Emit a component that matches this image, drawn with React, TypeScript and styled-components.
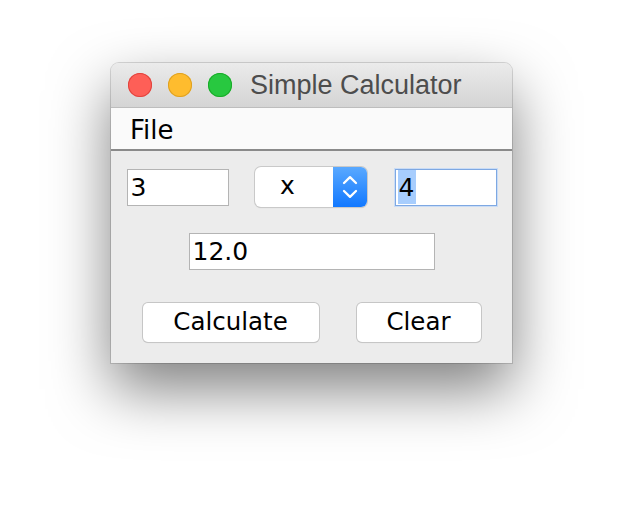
import React from "react";
import styled, { createGlobalStyle } from "styled-components";

const Global = createGlobalStyle`
  html, body { margin: 0; padding: 0; background: #ffffff; }
  body { font-family: "DejaVu Sans", "Liberation Sans", sans-serif; }
  * { box-sizing: border-box; }
`;

const Page = styled.div`
  width: 624px;
  height: 524px;
  padding: 63px 0 0 111px;
  background: #ffffff;
`;

const Window = styled.div`
  width: 401px;
  height: 300px;
  display: flex;
  flex-direction: column;
  border-radius: 8px 8px 0 0;
  overflow: hidden;
  background: #ececec;
  box-shadow: 0 0 0 1px rgba(0, 0, 0, 0.14), 0 26px 60px rgba(0, 0, 0, 0.5);
`;

const TitleBar = styled.div`
  height: 45px;
  flex: none;
  display: flex;
  align-items: center;
  padding: 0 0 0 17px;
  background: linear-gradient(#ebebeb, #d4d4d4);
  border-bottom: 1px solid #bdbdbd;
`;

const Light = styled.span<{ $fill: string; $edge: string }>`
  width: 24px;
  height: 24px;
  border-radius: 50%;
  margin-right: 16px;
  background: ${(p) => p.$fill};
  box-shadow: inset 0 0 0 1px ${(p) => p.$edge};
  flex: none;
`;

const Title = styled.span`
  margin-left: 2px;
  font-family: "Liberation Sans", Arial, sans-serif;
  font-size: 27px;
  color: #4d4d4d;
  line-height: 1;
  padding-top: 1px;
`;

const MenuBar = styled.div`
  height: 43px;
  flex: none;
  display: flex;
  align-items: center;
  padding: 3px 0 0 19px;
  background: #fafafa;
  border-bottom: 2px solid #8a8a8a;
`;

const MenuItem = styled.span`
  font-size: 26px;
  color: #000;
  line-height: 1;
`;

const Content = styled.div`
  flex: 1;
  display: flex;
  flex-direction: column;
  align-items: center;
  padding-top: 16px;
`;

const Row = styled.div<{ $gap: number; $mt: number }>`
  display: flex;
  align-items: center;
  justify-content: center;
  gap: ${(p) => p.$gap}px;
  margin-top: ${(p) => p.$mt}px;
`;

const Field = styled.div<{ $w: number; $focus?: boolean }>`
  width: ${(p) => p.$w}px;
  height: 37px;
  background: #ffffff;
  border: 1px solid ${(p) => (p.$focus ? "#7ea8e2" : "#b4b4b4")};
  box-shadow: ${(p) => (p.$focus ? "0 0 0 1px #c9dcf6" : "none")};
  display: flex;
  align-items: center;
  padding-left: ${(p) => (p.$focus ? 2 : 3)}px;
  font-size: 25px;
  color: #000;
  line-height: 1;
`;

const Selected = styled.span`
  background: #a7cdfd;
  height: 34px;
  display: flex;
  align-items: center;
  padding: 0 2px 0 1px;
`;

const Combo = styled.div`
  width: 112px;
  height: 40px;
  margin-right: 2px;
  display: flex;
  background: #ffffff;
  border-radius: 6px;
  box-shadow: 0 0 0 1px #c9c9c9, 0 1px 1px rgba(0, 0, 0, 0.18);
  overflow: hidden;
`;

const ComboValue = styled.div`
  flex: 1;
  display: flex;
  align-items: center;
  justify-content: center;
  font-size: 25px;
  color: #000;
  padding: 0 12px 3px 0;
`;

const ComboArrows = styled.div`
  width: 34px;
  flex: none;
  display: flex;
  align-items: center;
  justify-content: center;
  background: linear-gradient(#5aa9ff, #1178ff);
`;

const Button = styled.div<{ $w: number }>`
  width: ${(p) => p.$w}px;
  height: 39px;
  background: #ffffff;
  border-radius: 5px;
  box-shadow: 0 0 0 1px #c6c6c6, 0 1px 1px rgba(0, 0, 0, 0.12);
  display: flex;
  align-items: center;
  justify-content: center;
  font-size: 24.5px;
  color: #000;
  line-height: 1;
`;

export default function App() {
  return (
    <Page>
      <Global />
      <Window>
        <TitleBar>
          <Light $fill="#fe5f57" $edge="#e0443e" />
          <Light $fill="#febc2e" $edge="#dea123" />
          <Light $fill="#28c840" $edge="#1aab29" />
          <Title>Simple Calculator</Title>
        </TitleBar>
        <MenuBar>
          <MenuItem>File</MenuItem>
        </MenuBar>
        <Content>
          <Row $gap={26} $mt={0}>
            <Field $w={102}>3</Field>
            <Combo>
              <ComboValue>x</ComboValue>
              <ComboArrows>
                <svg width="18" height="26" viewBox="0 0 18 26" fill="none">
                  <path d="M3 9 L9 3.2 L15 9" stroke="#fff" strokeWidth="2.3" strokeLinecap="round" strokeLinejoin="round" />
                  <path d="M3 17 L9 22.8 L15 17" stroke="#fff" strokeWidth="2.3" strokeLinecap="round" strokeLinejoin="round" />
                </svg>
              </ComboArrows>
            </Combo>
            <Field $w={102} $focus>
              <Selected>4</Selected>
            </Field>
          </Row>
          <Row $gap={0} $mt={26}>
            <Field $w={246}>12.0</Field>
          </Row>
          <Row $gap={38} $mt={33}>
            <Button $w={176}>Calculate</Button>
            <Button $w={124}>Clear</Button>
          </Row>
        </Content>
      </Window>
    </Page>
  );
}
